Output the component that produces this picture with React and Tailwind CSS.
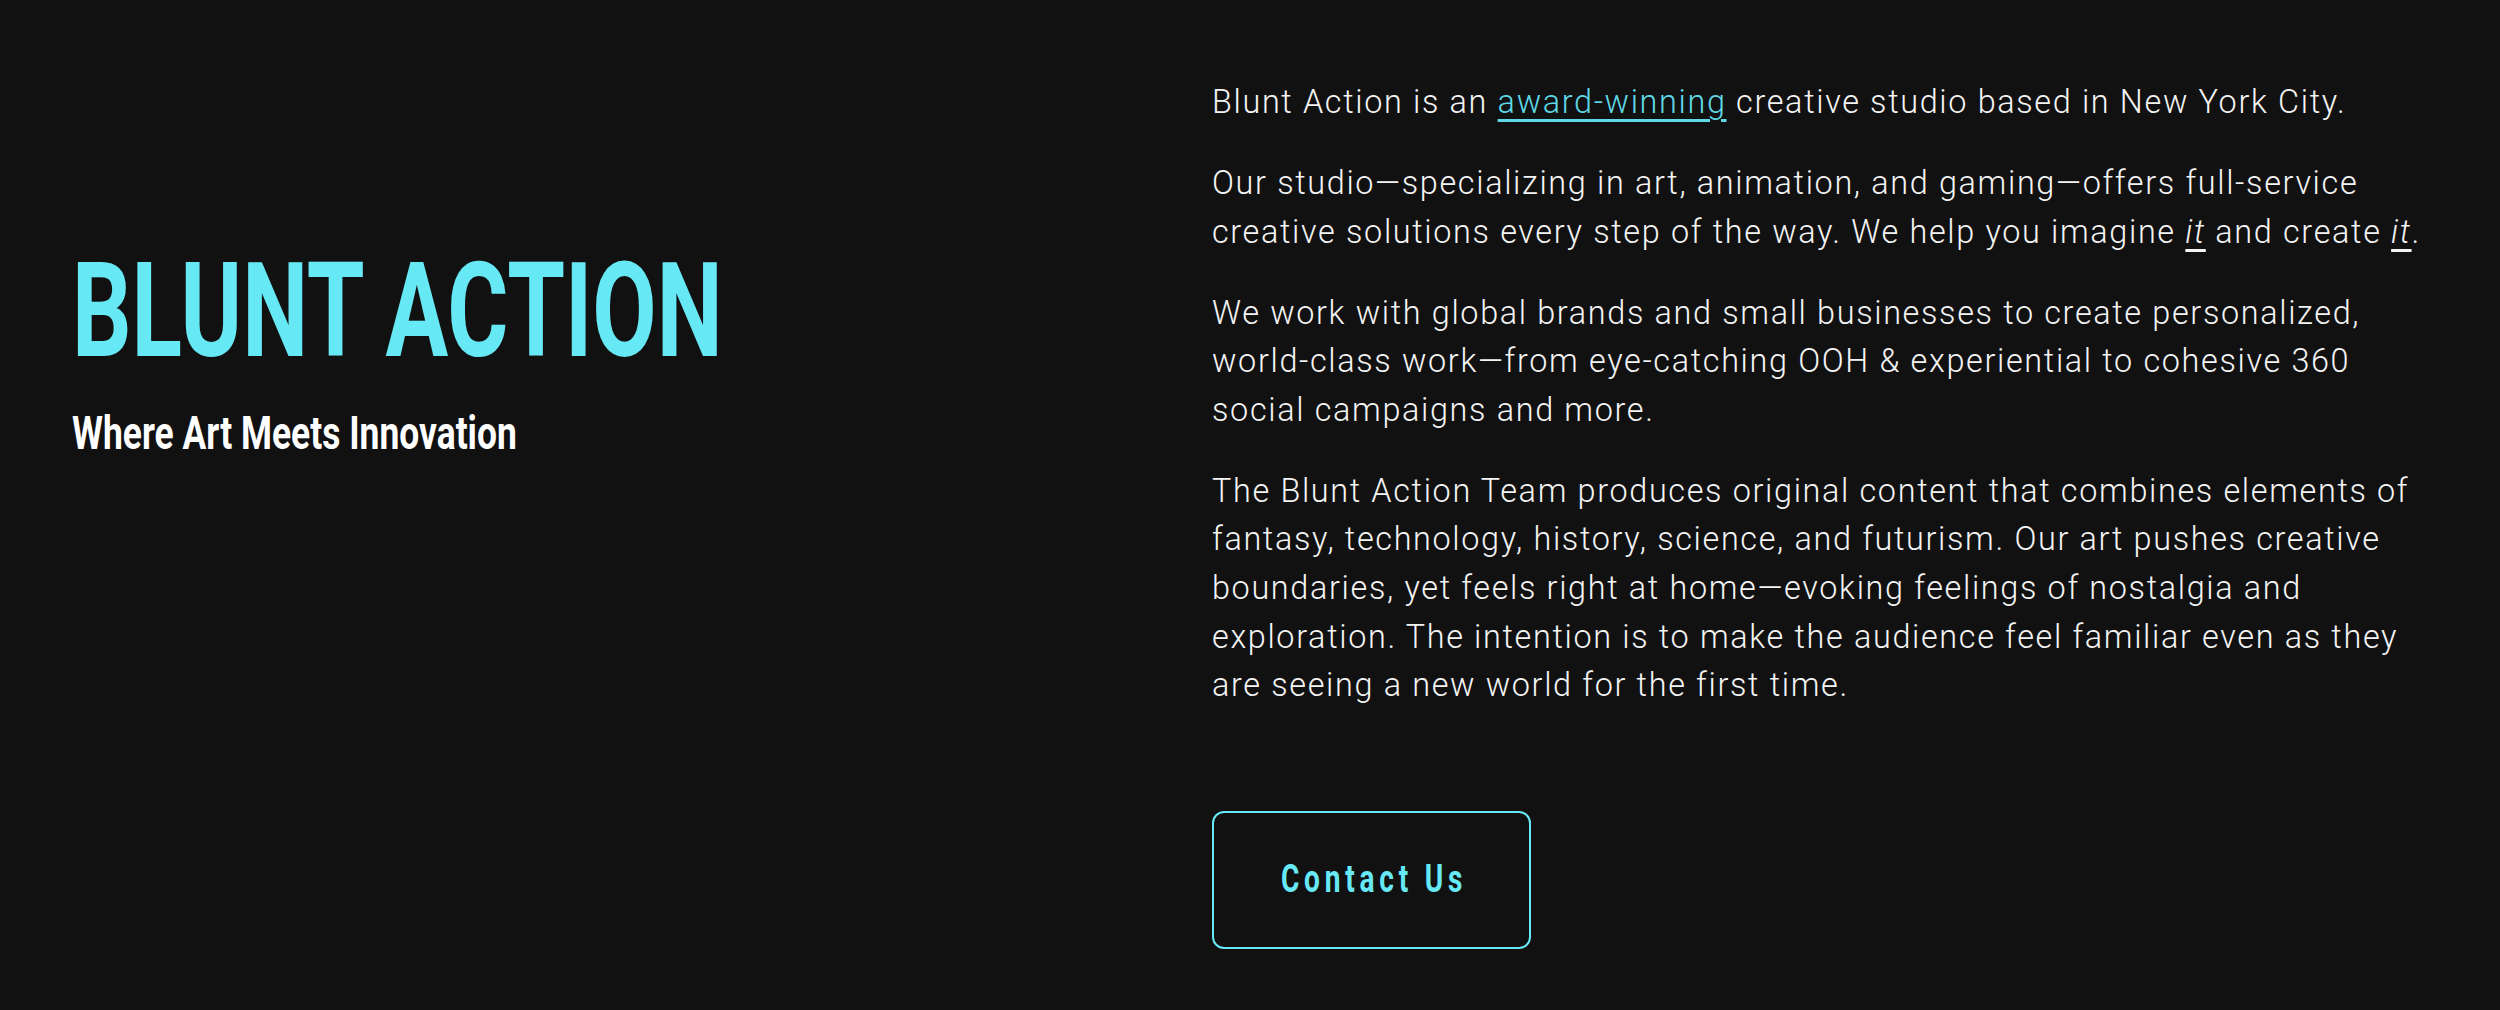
import React from "react";

const App = () => {
  return (
    <div className="min-h-screen w-full bg-[#111111] font-['Roboto',sans-serif]">
      <div className="grid grid-cols-[1140px_1fr] px-[72px] pt-[78px] pb-[61px]">
        {/* left: name + tagline */}
        <div className="pt-[168px]">
          <h1 className="origin-left scale-x-[0.713] text-[131px] leading-none font-bold whitespace-nowrap text-[#67e8f5]">
            BLUNT ACTION
          </h1>
          <p className="mt-[33px] origin-left scale-x-[0.77] text-[46px] leading-none font-bold whitespace-nowrap text-white">
            Where Art Meets Innovation
          </p>
        </div>

        {/* right: about copy */}
        <div className="text-[32.4px] leading-[1.5] font-light tracking-[0.051em] text-[#f4f4f4]">
          <p className="mb-[1em]">
            Blunt Action is an{" "}
            <a
              href="#"
              className="text-[#5fd8e6] underline decoration-[3px] underline-offset-[6px]"
            >
              award-winning
            </a>{" "}
            creative studio based in New York City.
          </p>
          <p className="mb-[1em]">
            Our studio—specializing in art, animation, and gaming—offers full-service
            creative solutions every step of the way. We help you imagine{" "}
            <em className="underline decoration-[3px] underline-offset-[6px]">it</em> and create{" "}
            <em className="underline decoration-[3px] underline-offset-[6px]">it</em>.
          </p>
          <p className="mb-[1em]">
            We work with global brands and small businesses to create personalized,
            world-class work—from eye-catching OOH &amp; experiential to cohesive 360
            social campaigns and more.
          </p>
          <p>
            The Blunt Action Team produces original content that combines elements of
            fantasy, technology, history, science, and futurism. Our art pushes creative
            boundaries, yet feels right at home—evoking feelings of nostalgia and
            exploration. The intention is to make the audience feel familiar even as they
            are seeing a new world for the first time.
          </p>

          <button className="mt-[101px] flex h-[138px] w-[319px] items-center justify-center rounded-xl border-2 border-[#67e8f5] bg-transparent">
            <span className="inline-block scale-x-[0.72] pl-[0.17em] text-[39px] leading-none font-bold tracking-[0.17em] whitespace-nowrap text-[#67e8f5]">
              Contact Us
            </span>
          </button>
        </div>
      </div>
    </div>
  );
};

export default App;
